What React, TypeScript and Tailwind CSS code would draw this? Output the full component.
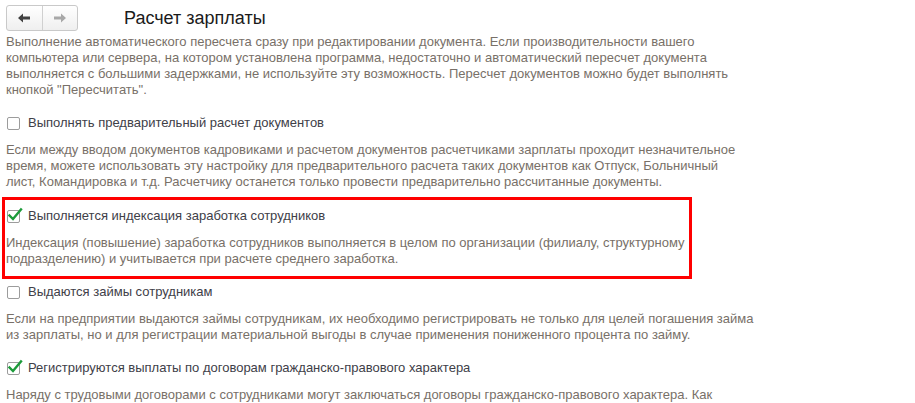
import { ReactNode } from 'react';

const font = { fontFamily: '"Liberation Sans", Arial, sans-serif' };

function ArrowLeft({ color }: { color: string }) {
  return (
    <svg width="12" height="10" viewBox="0 0 12 10">
      <path d="M0 5 L5 0.5 L5 3.5 L12 3.5 L12 6.5 L5 6.5 L5 9.5 Z" fill={color} />
    </svg>
  );
}

function ArrowRight({ color }: { color: string }) {
  return (
    <svg width="12" height="10" viewBox="0 0 12 10">
      <path d="M12 5 L7 0.5 L7 3.5 L0 3.5 L0 6.5 L7 6.5 L7 9.5 Z" fill={color} />
    </svg>
  );
}

function CheckBox({ checked }: { checked: boolean }) {
  return (
    <span className="relative inline-block h-[13px] w-[13px] shrink-0 rounded-[2px] border border-[#9c9c9c] bg-white">
      {checked && (
        <svg className="absolute -left-[1px] -top-[4px]" width="16" height="16" viewBox="0 0 16 16">
          <path d="M2.5 8.5 L6 12 L14 2.5" fill="none" stroke="#1c9b3a" strokeWidth="2.4" strokeLinecap="square" />
        </svg>
      )}
    </span>
  );
}

function Option({ checked, label, children }: { checked: boolean; label: string; children: ReactNode }) {
  return (
    <div>
      <label className="flex h-4 items-center gap-2 pl-[1px] text-[13px] text-[#404048]">
        <CheckBox checked={checked} />
        {label}
      </label>
      <p className="mt-[11px] text-[13px] leading-4 text-[#787068]">{children}</p>
    </div>
  );
}

export default function App() {
  return (
    <div className="h-[403px] w-[915px] overflow-hidden bg-white pl-[6px]" style={font}>
      {/* Header */}
      <div className="flex h-[34px] items-start pt-[5px]">
        <div className="flex h-[26px] w-[72px] overflow-hidden rounded-[3px] border border-[#c9c9c9] bg-gradient-to-b from-white to-[#efefef]">
          <button className="flex flex-1 items-center justify-center border-r border-[#d0d0d0]">
            <ArrowLeft color="#404040" />
          </button>
          <button className="flex flex-1 items-center justify-center">
            <ArrowRight color="#a8a8a8" />
          </button>
        </div>
        <h1 className="ml-[46px] mt-[1px] text-[18px] leading-[24px] text-[#1a1a1a]">Расчет зарплаты</h1>
      </div>

      <p className="text-[13px] leading-4 text-[#787068]">
        Выполнение автоматического пересчета сразу при редактировании документа. Если производительности вашего
        <br />
        компьютера или сервера, на котором установлена программа, недостаточно и автоматический пересчет документа
        <br />
        выполняется с большими задержками, не используйте эту возможность. Пересчет документов можно будет выполнять
        <br />
        кнопкой "Пересчитать".
      </p>

      <div className="mt-[17px] flex flex-col">
        <Option checked={false} label="Выполнять предварительный расчет документов">
          Если между вводом документов кадровиками и расчетом документов расчетчиками зарплаты проходит незначительное
          <br />
          время, можете использовать эту настройку для предварительного расчета таких документов как Отпуск, Больничный
          <br />
          лист, Командировка и т.д. Расчетчику останется только провести предварительно рассчитанные документы.
        </Option>

        <div className="relative mt-[18px]">
          {/* highlight frame around the indexation option */}
          <div className="pointer-events-none absolute -left-[4px] -top-[11px] -bottom-[12px] w-[690px] border-[3px] border-[#ff0000]" />
          <Option checked label="Выполняется индексация заработка сотрудников">
            Индексация (повышение) заработка сотрудников выполняется в целом по организации (филиалу, структурному
            <br />
            подразделению) и учитывается при расчете среднего заработка.
          </Option>
        </div>

        <div className="mt-[17px]">
          <Option checked={false} label="Выдаются займы сотрудникам">
            Если на предприятии выдаются займы сотрудникам, их необходимо регистрировать не только для целей погашения займа
            <br />
            из зарплаты, но и для регистрации материальной выгоды в случае применения пониженного процента по займу.
          </Option>
        </div>

        <div className="mt-[17px]">
          <Option checked label="Регистрируются выплаты по договорам гражданско-правового характера">
            Наряду с трудовыми договорами с сотрудниками могут заключаться договоры гражданско-правового характера. Как
          </Option>
        </div>
      </div>
    </div>
  );
}
